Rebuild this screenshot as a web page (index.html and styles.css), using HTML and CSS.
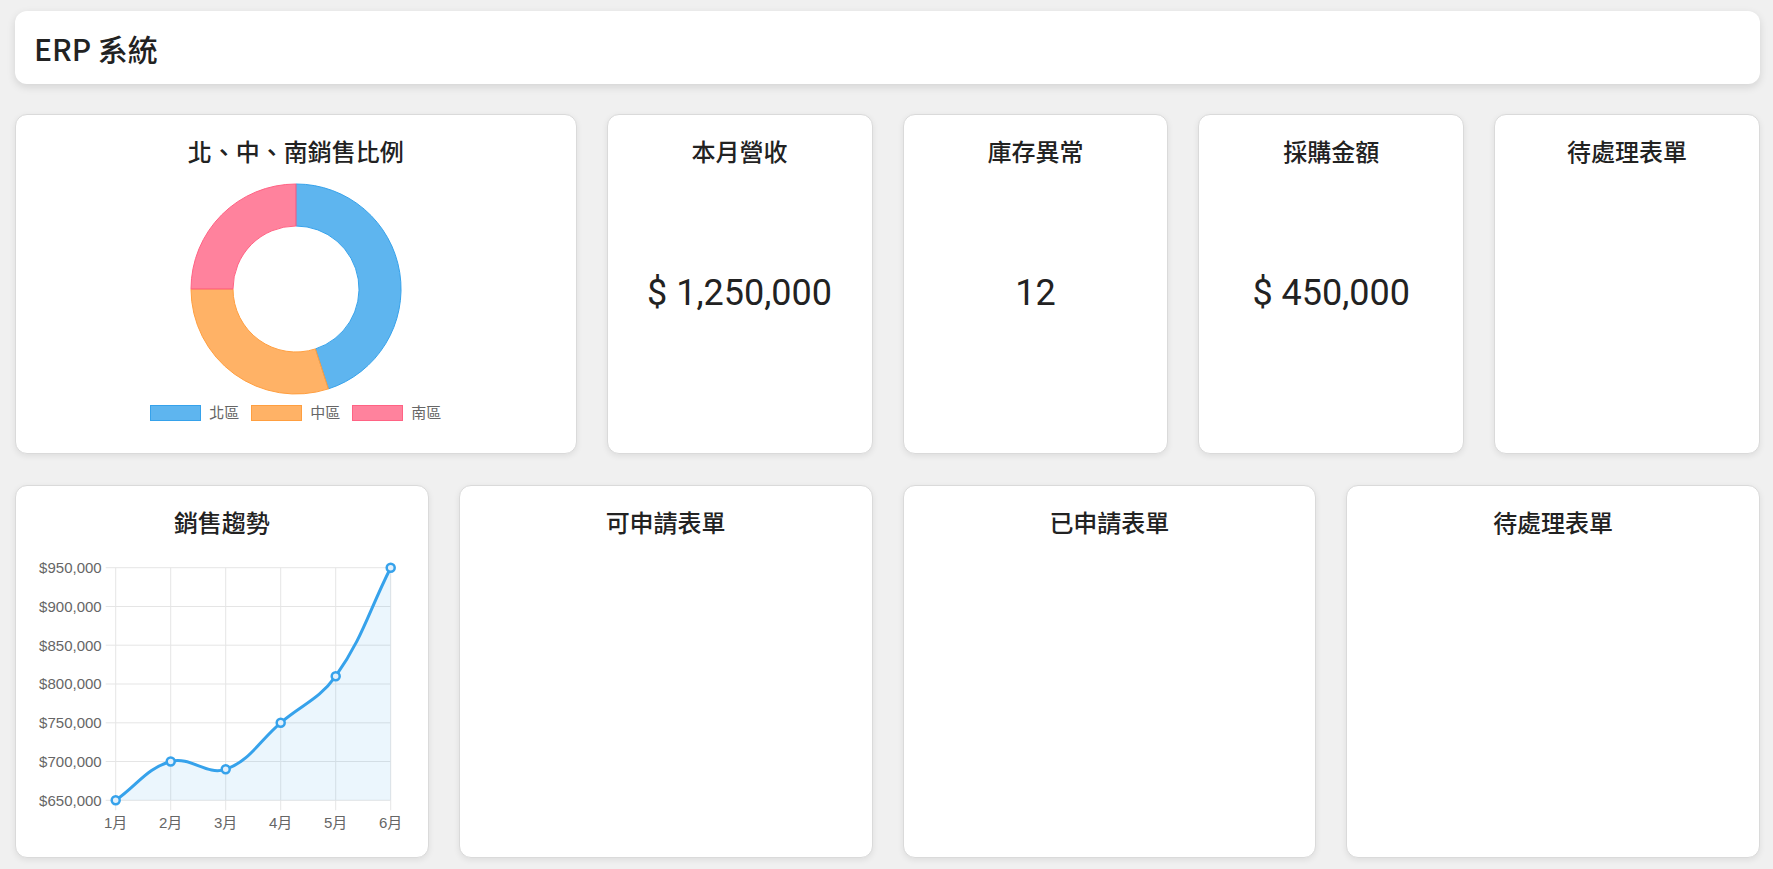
FILE: index.html
```html
<!DOCTYPE html>
<html lang="zh-Hant">
<head>
    <meta charset="UTF-8">
    <meta name="viewport" content="width=device-width, initial-scale=1.0">
    <title>ERP 系統</title>
    <link rel="stylesheet" href="styles.css">
</head>
<body>
    <div class="header">
        <h1>ERP 系統</h1>
    </div>

    <div class="row-top">
        <div class="card wide">
            <h3 class="card-title">北、中、南銷售比例</h3>
            <svg class="donut" width="220" height="220" viewBox="0 0 220 220">
                <path class="seg-north" d="M110 5 A105 105 0 0 1 142.45 209.87 L129.47 169.92 A63 63 0 0 0 110 47 Z"/>
                <path class="seg-central" d="M142.45 209.87 A105 105 0 0 1 5 110 L47 110 A63 63 0 0 0 129.47 169.92 Z"/>
                <path class="seg-south" d="M5 110 A105 105 0 0 1 110 5 L110 47 A63 63 0 0 0 47 110 Z"/>
            </svg>
            <div class="legend">
                <span class="legend-item"><span class="box north"></span>北區</span>
                <span class="legend-item"><span class="box central"></span>中區</span>
                <span class="legend-item"><span class="box south"></span>南區</span>
            </div>
        </div>
        <div class="card">
            <h3 class="card-title">本月營收</h3>
            <div class="value">$ 1,250,000</div>
        </div>
        <div class="card">
            <h3 class="card-title">庫存異常</h3>
            <div class="value">12</div>
        </div>
        <div class="card">
            <h3 class="card-title">採購金額</h3>
            <div class="value">$ 450,000</div>
        </div>
        <div class="card">
            <h3 class="card-title">待處理表單</h3>
        </div>
    </div>

    <div class="row-bottom">
        <div class="card">
            <h3 class="card-title">銷售趨勢</h3>
            <svg class="line-chart" width="372" height="299" viewBox="0 0 372 299">
                <g transform="translate(1,0)">
                    <g class="grid">
                        <line x1="68.7" y1="29.7" x2="353.7" y2="29.7"/>
                        <line x1="68.7" y1="68.5" x2="353.7" y2="68.5"/>
                        <line x1="68.7" y1="107.2" x2="353.7" y2="107.2"/>
                        <line x1="68.7" y1="146" x2="353.7" y2="146"/>
                        <line x1="68.7" y1="184.8" x2="353.7" y2="184.8"/>
                        <line x1="68.7" y1="223.5" x2="353.7" y2="223.5"/>
                        <line x1="68.7" y1="262.3" x2="353.7" y2="262.3"/>
                        <line x1="78.7" y1="29.7" x2="78.7" y2="272.3"/>
                        <line x1="133.7" y1="29.7" x2="133.7" y2="272.3"/>
                        <line x1="188.7" y1="29.7" x2="188.7" y2="272.3"/>
                        <line x1="243.7" y1="29.7" x2="243.7" y2="272.3"/>
                        <line x1="298.7" y1="29.7" x2="298.7" y2="272.3"/>
                        <line x1="353.7" y1="29.7" x2="353.7" y2="272.3"/>
                    </g>
                    <g class="y-labels">
                        <text x="64.7" y="35">$950,000</text>
                        <text x="64.7" y="73.8">$900,000</text>
                        <text x="64.7" y="112.5">$850,000</text>
                        <text x="64.7" y="151.3">$800,000</text>
                        <text x="64.7" y="190.1">$750,000</text>
                        <text x="64.7" y="228.8">$700,000</text>
                        <text x="64.7" y="267.6">$650,000</text>
                    </g>
                    <g class="x-labels">
                        <text x="78.7" y="289.6">1月</text>
                        <text x="133.7" y="289.6">2月</text>
                        <text x="188.7" y="289.6">3月</text>
                        <text x="243.7" y="289.6">4月</text>
                        <text x="298.7" y="289.6">5月</text>
                        <text x="353.7" y="289.6">6月</text>
                    </g>
                    <path class="area" d="M78.7 262.3 C100.7 246.8 109.6 230.3 133.7 223.5 C153.6 217.9 169.5 238 188.7 231.3 C213.5 222.6 221.7 203.4 243.7 184.8 C265.7 166.2 282.3 161.3 298.7 138.2 C326.3 99.2 331.7 73.1 353.7 29.7 L353.7 262.3 Z"/>
                    <path class="trend" d="M78.7 262.3 C100.7 246.8 109.6 230.3 133.7 223.5 C153.6 217.9 169.5 238 188.7 231.3 C213.5 222.6 221.7 203.4 243.7 184.8 C265.7 166.2 282.3 161.3 298.7 138.2 C326.3 99.2 331.7 73.1 353.7 29.7"/>
                    <g class="points">
                        <circle cx="78.7" cy="262.3" r="4"/>
                        <circle cx="133.7" cy="223.5" r="4"/>
                        <circle cx="188.7" cy="231.3" r="4"/>
                        <circle cx="243.7" cy="184.8" r="4"/>
                        <circle cx="298.7" cy="138.2" r="4"/>
                        <circle cx="353.7" cy="29.7" r="4"/>
                    </g>
                </g>
            </svg>
        </div>
        <div class="card">
            <h3 class="card-title">可申請表單</h3>
        </div>
        <div class="card">
            <h3 class="card-title">已申請表單</h3>
        </div>
        <div class="card">
            <h3 class="card-title">待處理表單</h3>
        </div>
    </div>
</body>
</html>
```

FILE: styles.css
```css
* {
    box-sizing: border-box;
}
body {
    margin: 0;
    padding: 11px 13px 0 15px;
    height: 869px;
    overflow: hidden;
    background-color: #f0f0f0;
    color: #222;
    font-family: "Open Sans", "Noto Sans CJK TC", sans-serif;
}
.header {
    height: 73px;
    background-color: #fff;
    border-radius: 12px;
    box-shadow: 0 3px 8px rgba(0, 0, 0, 0.12);
    display: flex;
    align-items: center;
    padding: 0 19px;
    margin-bottom: 30px;
}
.header h1 {
    margin: 0;
    font-family: "Noto Sans CJK TC", sans-serif;
    font-size: 30px;
    font-weight: 500;
}
.row-top {
    display: grid;
    grid-template-columns: repeat(6, 1fr);
    gap: 30px;
    height: 340px;
    margin-bottom: 31px;
}
.wide {
    grid-column: span 2;
}
.row-bottom {
    display: grid;
    grid-template-columns: repeat(4, 1fr);
    gap: 30px;
    height: 373px;
}
.card {
    background-color: #fff;
    border: 1px solid #dadada;
    border-radius: 12px;
    box-shadow: 0 2px 6px rgba(0, 0, 0, 0.08);
    padding: 20px;
    display: flex;
    flex-direction: column;
    align-items: center;
    text-align: center;
    min-width: 0;
}
.card-title {
    margin: 0;
    font-family: "Noto Sans CJK TC", sans-serif;
    font-size: 24px;
    line-height: 32px;
    font-weight: 500;
    color: #222;
}
.value {
    flex: 1;
    display: flex;
    align-items: center;
    justify-content: center;
    padding-bottom: 15px;
    font-family: Roboto, "Open Sans", sans-serif;
    font-size: 36px;
    font-weight: 400;
    color: #222;
}

/* donut */
.donut {
    display: block;
    margin-top: 12px;
}
.donut path {
    stroke-width: 1;
}
.seg-north {
    fill: rgba(54, 162, 235, 0.8);
    stroke: rgb(54, 162, 235);
}
.seg-central {
    fill: rgba(255, 159, 64, 0.8);
    stroke: rgb(255, 159, 64);
}
.seg-south {
    fill: rgba(255, 99, 132, 0.8);
    stroke: rgb(255, 99, 132);
}
.legend {
    display: flex;
    justify-content: center;
    gap: 12px;
    margin-top: 6px;
    font-family: "Liberation Sans", "Noto Sans CJK TC", sans-serif;
    font-size: 15px;
    line-height: 16px;
    color: #666;
}
.legend-item {
    display: flex;
    align-items: center;
    gap: 8px;
}
.box {
    width: 51px;
    height: 16px;
    border: 1px solid;
}
.box.north {
    background-color: rgba(54, 162, 235, 0.8);
    border-color: rgb(54, 162, 235);
}
.box.central {
    background-color: rgba(255, 159, 64, 0.8);
    border-color: rgb(255, 159, 64);
}
.box.south {
    background-color: rgba(255, 99, 132, 0.8);
    border-color: rgb(255, 99, 132);
}

/* line chart */
.line-chart {
    display: block;
    align-self: flex-start;
    overflow: visible;
}
.grid line {
    stroke: #e5e5e5;
    stroke-width: 1;
}
.y-labels text,
.x-labels text {
    font-family: "Liberation Sans", "Noto Sans CJK TC", sans-serif;
    font-size: 15px;
    fill: #666;
}
.y-labels text {
    text-anchor: end;
}
.x-labels text {
    text-anchor: middle;
}
.area {
    fill: rgba(54, 162, 235, 0.1);
}
.trend {
    fill: none;
    stroke: rgb(54, 162, 235);
    stroke-width: 3;
}
.points circle {
    fill: #e3f0fb;
    stroke: rgb(54, 162, 235);
    stroke-width: 2.5;
}
```
